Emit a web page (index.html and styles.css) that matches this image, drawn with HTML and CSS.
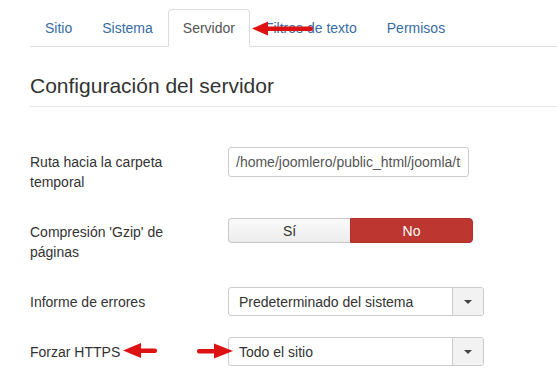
FILE: index.html
```html
<!DOCTYPE html>
<html lang="es">
<head>
<meta charset="utf-8">
<title>Configuración del servidor</title>
<link rel="stylesheet" href="styles.css">
</head>
<body>
<div class="page">
  <ul class="tabs">
    <li class="tab"><a href="#">Sitio</a></li>
    <li class="tab"><a href="#">Sistema</a></li>
    <li class="tab active"><a href="#">Servidor</a></li>
    <li class="tab"><a href="#">Filtros de texto</a></li>
    <li class="tab"><a href="#">Permisos</a></li>
  </ul>

  <h2 class="legend">Configuración del servidor</h2>

  <div class="form">
    <div class="row">
      <label class="label">Ruta hacia la carpeta temporal</label>
      <div class="control">
        <input class="text-input" type="text" value="/home/joomlero/public_html/joomla/tmp">
      </div>
    </div>
    <div class="row">
      <label class="label">Compresión 'Gzip' de páginas</label>
      <div class="control">
        <div class="toggle">
          <span class="toggle-btn">Sí</span>
          <span class="toggle-btn on">No</span>
        </div>
      </div>
    </div>
    <div class="row">
      <label class="label">Informe de errores</label>
      <div class="control">
        <div class="select">
          <span class="select-value">Predeterminado del sistema</span>
          <span class="select-arrow"><span class="caret"></span></span>
        </div>
      </div>
    </div>
    <div class="row">
      <label class="label">Forzar HTTPS</label>
      <div class="control">
        <div class="select">
          <span class="select-value">Todo el sitio</span>
          <span class="select-arrow"><span class="caret"></span></span>
        </div>
      </div>
    </div>
  </div>
</div>

<svg class="annotations" width="557" height="387" viewBox="0 0 557 387" aria-hidden="true">
  <g fill="#dd1212">
    <polygon points="252,28.5 268,21.5 268,35.5"/>
    <rect x="266" y="26.5" width="47" height="4.5" rx="2"/>
    <polygon points="123,350.5 141,343 141,358"/>
    <rect x="139" y="348.5" width="18" height="4.5" rx="2"/>
    <polygon points="233,351 214,343.5 214,358.5"/>
    <rect x="197" y="349" width="19" height="4.5" rx="2"/>
  </g>
</svg>
</body>
</html>
```

FILE: styles.css
```css
* {
  box-sizing: border-box;
}

html, body {
  margin: 0;
  padding: 0;
  background: #fff;
}

body {
  font-family: "Liberation Sans", Arial, sans-serif;
  font-size: 14px;
  line-height: 20px;
  color: #333;
  width: 557px;
  height: 387px;
  overflow: hidden;
  position: relative;
}

.page {
  padding: 9px 0 0 30px;
}

.tabs {
  list-style: none;
  margin: 0;
  padding: 0;
  display: flex;
  border-bottom: 1px solid #ddd;
}

.tab {
  margin-bottom: -1px;
}

.tab a {
  display: block;
  padding: 8px 14px;
  border: 1px solid transparent;
  border-radius: 4px 4px 0 0;
  color: #386ca3;
  text-decoration: none;
  line-height: 20px;
}

.tab.active a {
  color: #555;
  background: #fff;
  border-color: #ddd #ddd transparent;
}

.legend {
  margin: 27px 0 40px;
  padding: 0 0 8px;
  font-size: 21px;
  font-weight: normal;
  line-height: 24px;
  color: #333;
  border-bottom: 1px solid #e5e5e5;
}

.row {
  display: grid;
  grid-template-columns: 160px 1fr;
  column-gap: 38px;
  margin-bottom: 21px;
}

.label {
  padding: 5px 0 4px;
  line-height: 20px;
  color: #333;
}

.text-input {
  display: block;
  width: 241px;
  height: 30px;
  padding: 0 7px;
  border: 1px solid #ccc;
  border-radius: 3px;
  font-family: inherit;
  font-size: 14px;
  color: #555;
  background: #fff;
  outline: none;
}

.toggle {
  display: flex;
  width: 245px;
  height: 25px;
  margin-top: 1px;
}

.toggle-btn {
  flex: 1;
  display: flex;
  align-items: center;
  justify-content: center;
  font-size: 14px;
  color: #333;
  background: linear-gradient(#fafafa, #ececec);
  border: 1px solid #c8c8c8;
  border-right: none;
  border-radius: 4px 0 0 4px;
}

.toggle-btn.on {
  color: #fff;
  background: #bd362f;
  border: 1px solid #b0302a;
  border-radius: 0 4px 4px 0;
}

.select {
  display: flex;
  width: 256px;
  height: 29px;
  border: 1px solid #ccc;
  border-radius: 3px;
  background: #fff;
  overflow: hidden;
}

.select-value {
  flex: 1;
  display: flex;
  align-items: center;
  padding-left: 10px;
  color: #333;
  white-space: nowrap;
}

.select-arrow {
  width: 31px;
  display: flex;
  align-items: center;
  justify-content: center;
  background: #f2f2f2;
  border-left: 1px solid #ccc;
}

.caret {
  width: 0;
  height: 0;
  border-left: 4px solid transparent;
  border-right: 4px solid transparent;
  border-top: 4px solid #444;
}

.annotations {
  position: absolute;
  left: 0;
  top: 0;
  pointer-events: none;
}
```
